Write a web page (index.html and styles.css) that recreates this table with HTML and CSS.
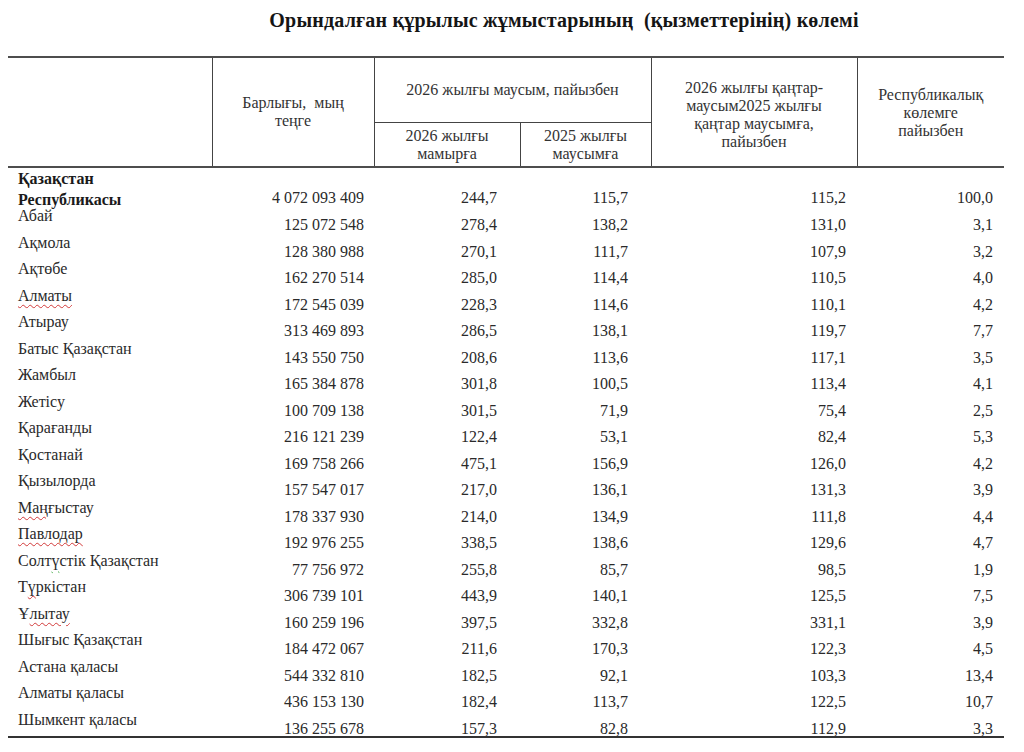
FILE: index.html
```html
<!DOCTYPE html>
<html lang="kk">
<head>
<meta charset="utf-8">
<title>Орындалған құрылыс жұмыстарының көлемі</title>
<link rel="stylesheet" href="styles.css">
</head>
<body>
<h1 class="title">Орындалған құрылыс жұмыстарының&nbsp; (қызметтерінің) көлемі</h1>
<table class="data">
  <colgroup>
    <col class="c0"><col class="c1"><col class="c2"><col class="c3"><col class="c4"><col class="c5">
  </colgroup>
  <thead>
    <tr class="h1">
      <th rowspan="2" class="hl"></th>
      <th rowspan="2" class="hc">Барлығы,&nbsp; мың<br>теңге</th>
      <th colspan="2" class="hc">2026 жылғы маусым, пайызбен</th>
      <th rowspan="2" class="hc hq">2026 жылғы қаңтар-<br>маусым2025 жылғы<br>қаңтар маусымға,<br>пайызбен</th>
      <th rowspan="2" class="hc hr">Республикалық<br>көлемге<br>пайызбен</th>
    </tr>
    <tr class="h2">
      <th class="hc">2026 жылғы<br>мамырға</th>
      <th class="hc">2025 жылғы<br>маусымға</th>
    </tr>
  </thead>
  <tbody>
    <tr class="total">
      <td class="lab"><div class="bold2">Қазақстан<br>Республикасы</div></td>
      <td class="num n1">4 072 093 409</td><td class="num n2">244,7</td><td class="num n3">115,7</td><td class="num n4">115,2</td><td class="num n5">100,0</td>
    </tr>
    <tr><td class="lab">Абай</td><td class="num n1">125 072 548</td><td class="num n2">278,4</td><td class="num n3">138,2</td><td class="num n4">131,0</td><td class="num n5">3,1</td></tr>
    <tr><td class="lab">Ақмола</td><td class="num n1">128 380 988</td><td class="num n2">270,1</td><td class="num n3">111,7</td><td class="num n4">107,9</td><td class="num n5">3,2</td></tr>
    <tr><td class="lab">Ақтөбе</td><td class="num n1">162 270 514</td><td class="num n2">285,0</td><td class="num n3">114,4</td><td class="num n4">110,5</td><td class="num n5">4,0</td></tr>
    <tr><td class="lab"><span class="sp">Алматы</span></td><td class="num n1">172 545 039</td><td class="num n2">228,3</td><td class="num n3">114,6</td><td class="num n4">110,1</td><td class="num n5">4,2</td></tr>
    <tr><td class="lab">Атырау</td><td class="num n1">313 469 893</td><td class="num n2">286,5</td><td class="num n3">138,1</td><td class="num n4">119,7</td><td class="num n5">7,7</td></tr>
    <tr><td class="lab">Батыс Қазақстан</td><td class="num n1">143 550 750</td><td class="num n2">208,6</td><td class="num n3">113,6</td><td class="num n4">117,1</td><td class="num n5">3,5</td></tr>
    <tr><td class="lab">Жамбыл</td><td class="num n1">165 384 878</td><td class="num n2">301,8</td><td class="num n3">100,5</td><td class="num n4">113,4</td><td class="num n5">4,1</td></tr>
    <tr><td class="lab">Жетісу</td><td class="num n1">100 709 138</td><td class="num n2">301,5</td><td class="num n3">71,9</td><td class="num n4">75,4</td><td class="num n5">2,5</td></tr>
    <tr><td class="lab">Қарағанды</td><td class="num n1">216 121 239</td><td class="num n2">122,4</td><td class="num n3">53,1</td><td class="num n4">82,4</td><td class="num n5">5,3</td></tr>
    <tr><td class="lab">Қостанай</td><td class="num n1">169 758 266</td><td class="num n2">475,1</td><td class="num n3">156,9</td><td class="num n4">126,0</td><td class="num n5">4,2</td></tr>
    <tr><td class="lab">Қызылорда</td><td class="num n1">157 547 017</td><td class="num n2">217,0</td><td class="num n3">136,1</td><td class="num n4">131,3</td><td class="num n5">3,9</td></tr>
    <tr><td class="lab"><span class="sp">Маң</span>ғыстау</td><td class="num n1">178 337 930</td><td class="num n2">214,0</td><td class="num n3">134,9</td><td class="num n4">111,8</td><td class="num n5">4,4</td></tr>
    <tr><td class="lab"><span class="sp">Павлодар</span></td><td class="num n1">192 976 255</td><td class="num n2">338,5</td><td class="num n3">138,6</td><td class="num n4">129,6</td><td class="num n5">4,7</td></tr>
    <tr><td class="lab">Солт<span class="sg">ү</span>стік Қазақстан</td><td class="num n1">77 756 972</td><td class="num n2">255,8</td><td class="num n3">85,7</td><td class="num n4">98,5</td><td class="num n5">1,9</td></tr>
    <tr><td class="lab">Т<span class="sp">ү</span>ркістан</td><td class="num n1">306 739 101</td><td class="num n2">443,9</td><td class="num n3">140,1</td><td class="num n4">125,5</td><td class="num n5">7,5</td></tr>
    <tr><td class="lab">Ұ<span class="sp">лытау</span></td><td class="num n1">160 259 196</td><td class="num n2">397,5</td><td class="num n3">332,8</td><td class="num n4">331,1</td><td class="num n5">3,9</td></tr>
    <tr><td class="lab">Шығыс Қазақстан</td><td class="num n1">184 472 067</td><td class="num n2">211,6</td><td class="num n3">170,3</td><td class="num n4">122,3</td><td class="num n5">4,5</td></tr>
    <tr><td class="lab">Астана қаласы</td><td class="num n1">544 332 810</td><td class="num n2">182,5</td><td class="num n3">92,1</td><td class="num n4">103,3</td><td class="num n5">13,4</td></tr>
    <tr><td class="lab">Алматы қаласы</td><td class="num n1">436 153 130</td><td class="num n2">182,4</td><td class="num n3">113,7</td><td class="num n4">122,5</td><td class="num n5">10,7</td></tr>
    <tr class="last"><td class="lab">Шымкент қаласы</td><td class="num n1">136 255 678</td><td class="num n2">157,3</td><td class="num n3">82,8</td><td class="num n4">112,9</td><td class="num n5">3,3</td></tr>
  </tbody>
</table>
</body>
</html>
```

FILE: styles.css
```css
html, body {
  margin: 0;
  padding: 0;
  background: #ffffff;
}

body {
  width: 1024px;
  height: 752px;
  overflow: hidden;
  font-family: "Liberation Serif", "Times New Roman", serif;
  color: #2a2a2a;
}

.title {
  margin: 9px 0 25px 0;
  padding-left: 104px;
  font-size: 20px;
  line-height: 22px;
  font-weight: bold;
  text-align: center;
  color: #151515;
  letter-spacing: 0.2px;
}

.data {
  margin-left: 8px;
  width: 996px;
  table-layout: fixed;
  border-collapse: collapse;
  border-spacing: 0;
}

.c0 { width: 204px; }
.c1 { width: 162px; }
.c2 { width: 146px; }
.c3 { width: 131px; }
.c4 { width: 206px; }
.c5 { width: 147px; }

.data thead th {
  font-weight: normal;
  font-size: 16px;
  line-height: 18px;
  color: #333333;
  padding: 0;
  vertical-align: middle;
  text-align: center;
  border: 1.5px solid #444444;
  border-top: 2px solid #4d4d4d;
}

.data thead th:first-child {
  border-left: none;
}

.data thead th.hr {
  border-right: none;
  padding-top: 2px;
}

.data thead th.hq {
  padding-top: 6px;
}

.h1 { height: 65px; }
.h2 { height: 45px; }

.data thead .h2 th {
  border-top: 1.5px solid #444444;
  padding-top: 1px;
}

.data thead tr:last-child th,
.data thead th[rowspan] {
  border-bottom: 2px solid #4d4d4d;
}

.data tbody td {
  padding: 0;
  vertical-align: top;
  font-size: 16px;
  white-space: nowrap;
}

.data tbody tr {
  height: 26.5px;
}

.data tbody tr.total {
  height: 38px;
}

.lab {
  padding-left: 10px !important;
  padding-top: 1px !important;
  line-height: 18px;
  text-align: left;
}

.bold2 {
  font-weight: bold;
  line-height: 21px;
  margin-top: -1.5px;
  margin-bottom: -4px;
  color: #1a1a1a;
}

.num {
  text-align: right;
  line-height: 15px;
  padding-top: 11px !important;
}

.total .num {
  padding-top: 22px !important;
  line-height: 16px;
}

.n1 { padding-right: 10px !important; }
.n2 { padding-right: 23px !important; }
.n3 { padding-right: 23px !important; }
.n4 { padding-right: 11px !important; }
.n5 { padding-right: 11px !important; }

.data tbody tr.last td {
  border-bottom: 2px solid #333333;
}

.sp {
  text-decoration: underline wavy #d23a3a;
  text-decoration-thickness: 1px;
  text-underline-offset: 3px;
}

.sg {
  text-decoration: underline wavy #4caf50;
  text-decoration-thickness: 1px;
  text-underline-offset: 3px;
}
```
